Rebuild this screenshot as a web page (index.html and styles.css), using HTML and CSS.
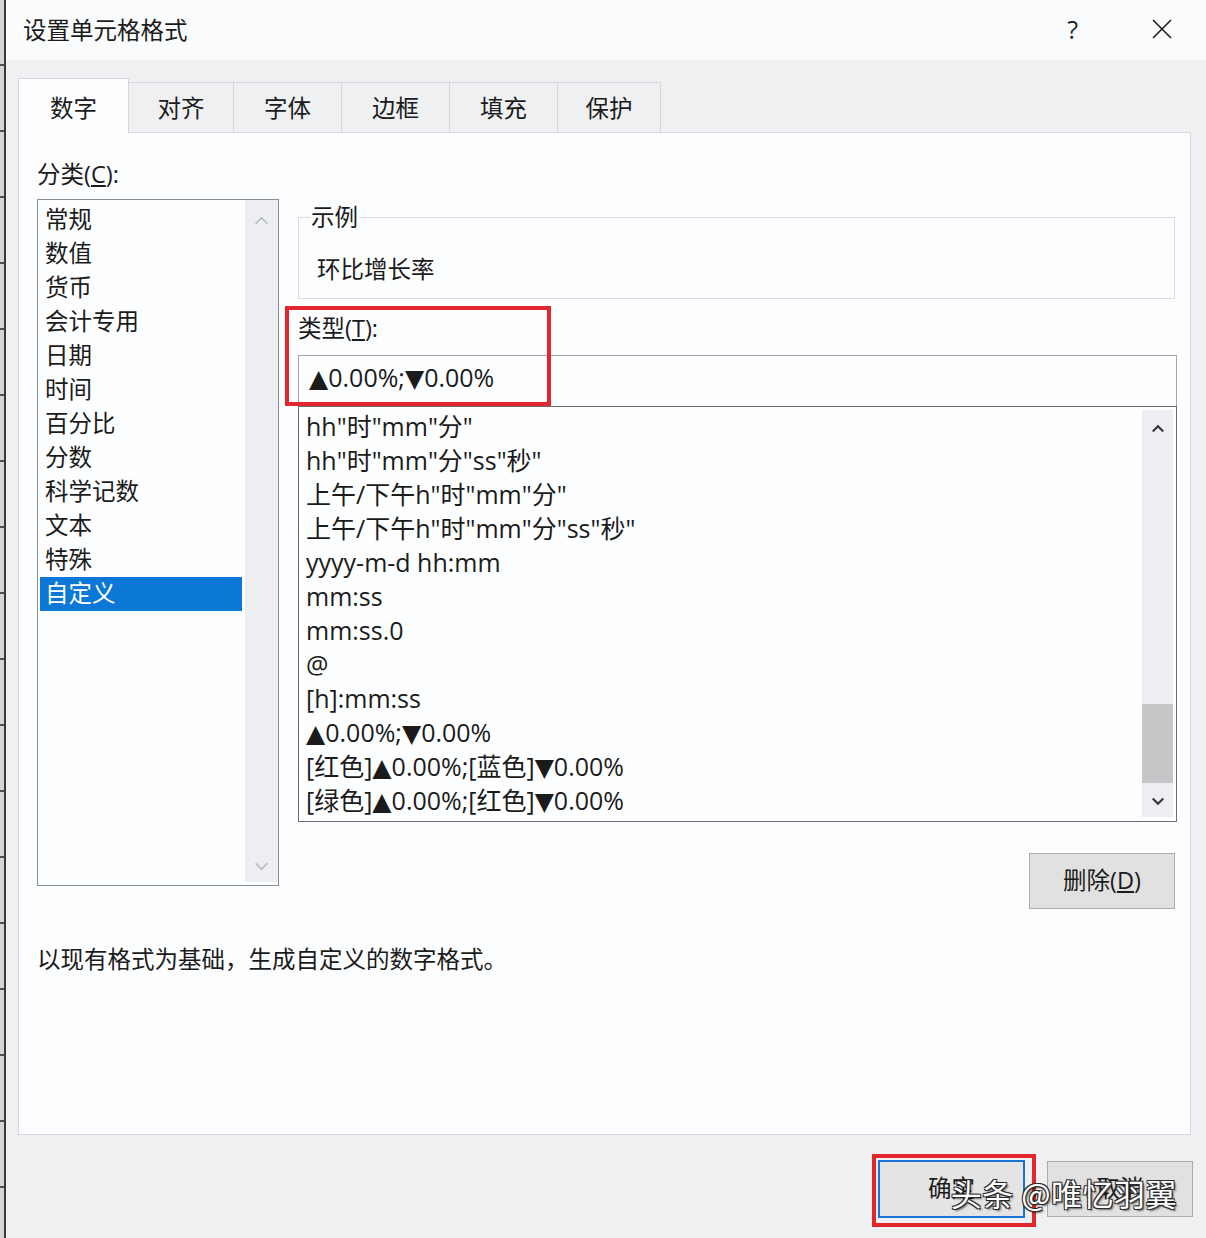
FILE: index.html
```html
<!DOCTYPE html>
<html lang="zh-CN">
<head>
<meta charset="utf-8">
<title>设置单元格格式</title>
<link rel="stylesheet" href="styles.css">
</head>
<body>
<div class="screen">
  <div class="sheet-strip"></div>
  <div class="dialog">
    <header class="titlebar">
      <span class="title">设置单元格格式</span>
      <div class="title-actions">
        <span class="help">?</span>
        <svg class="close" viewBox="0 0 20 20" width="20" height="20"><path d="M1 1 L19 19 M19 1 L1 19" stroke="#1e1e1e" stroke-width="1.6" fill="none"/></svg>
      </div>
    </header>
    <div class="body">
      <nav class="tabs">
        <div class="tab active w-num">数字</div>
        <div class="tab w-align">对齐</div>
        <div class="tab w-std">字体</div>
        <div class="tab w-std">边框</div>
        <div class="tab w-std">填充</div>
        <div class="tab w-prot">保护</div>
      </nav>
      <section class="panel">
        <div class="panel-top">
          <div class="col-left">
            <div class="label">分类(<u>C</u>):</div>
            <div class="listbox cat-list">
              <ul class="cat-items">
                <li>常规</li>
                <li>数值</li>
                <li>货币</li>
                <li>会计专用</li>
                <li>日期</li>
                <li>时间</li>
                <li>百分比</li>
                <li>分数</li>
                <li>科学记数</li>
                <li>文本</li>
                <li>特殊</li>
                <li class="selected">自定义</li>
              </ul>
              <div class="vscroll cat-scroll">
                <div class="sb-btn sb-up"><svg viewBox="0 0 16 10" width="15" height="9"><path d="M1.5 8.5 L8 2 L14.5 8.5" fill="none" stroke="#b3b6bb" stroke-width="1.6"/></svg></div>
                <div class="sb-track"></div>
                <div class="sb-btn sb-down"><svg viewBox="0 0 16 10" width="15" height="9"><path d="M1.5 1.5 L8 8 L14.5 1.5" fill="none" stroke="#b3b6bb" stroke-width="1.6"/></svg></div>
              </div>
            </div>
          </div>
          <div class="col-right">
            <fieldset class="sample">
              <legend>示例</legend>
              <div class="sample-value">环比增长率</div>
            </fieldset>
            <div class="label type-label">类型(<u>T</u>):</div>
            <div class="type-input">▲0.00%;▼0.00%</div>
            <div class="listbox fmt-list">
              <ul class="fmt-items">
                <li>hh"时"mm"分"</li>
                <li>hh"时"mm"分"ss"秒"</li>
                <li>上午/下午h"时"mm"分"</li>
                <li>上午/下午h"时"mm"分"ss"秒"</li>
                <li>yyyy-m-d hh:mm</li>
                <li>mm:ss</li>
                <li>mm:ss.0</li>
                <li>@</li>
                <li>[h]:mm:ss</li>
                <li>▲0.00%;▼0.00%</li>
                <li>[红色]▲0.00%;[蓝色]▼0.00%</li>
                <li>[绿色]▲0.00%;[红色]▼0.00%</li>
              </ul>
              <div class="vscroll fmt-scroll">
                <div class="sb-btn sb-up"><svg viewBox="0 0 16 10" width="14" height="9"><path d="M2 8.5 L8 2.5 L14 8.5" fill="none" stroke="#333" stroke-width="2.4"/></svg></div>
                <div class="sb-track"><div class="sb-thumb"></div></div>
                <div class="sb-btn sb-down"><svg viewBox="0 0 16 10" width="14" height="9"><path d="M2 1.5 L8 7.5 L14 1.5" fill="none" stroke="#333" stroke-width="2.4"/></svg></div>
              </div>
            </div>
            <div class="btn-row">
              <button class="btn">删除(<u>D</u>)</button>
            </div>
            <div class="mark type-mark"></div>
          </div>
        </div>
        <p class="desc">以现有格式为基础，生成自定义的数字格式。</p>
      </section>
      <footer class="actions">
        <div class="ok-wrap">
          <button class="btn ok">确定</button>
        </div>
        <button class="btn cancel">取消</button>
        <div class="watermark">头条 @唯忆羽翼</div>
      </footer>
    </div>
  </div>
</div>
</body>
</html>
```

FILE: styles.css
```css
* { box-sizing: border-box; }

html, body {
  margin: 0;
  padding: 0;
}

body {
  width: 1206px;
  height: 1238px;
  overflow: hidden;
  font-family: "Open Sans", "Noto Sans CJK SC", sans-serif;
  color: #1b1b1b;
  background: #eff0f2;
}

.screen {
  display: flex;
  width: 1206px;
  height: 1238px;
}

.sheet-strip {
  width: 6px;
  flex: none;
  border-right: 2px solid #3a3a3a;
  background: repeating-linear-gradient(to bottom, #d4d5d6 0 64px, #505050 64px 66px);
}

.dialog {
  flex: 1;
  display: flex;
  flex-direction: column;
  background: #eff0f2;
}

.titlebar {
  height: 60px;
  flex: none;
  background: #fafbfc;
  display: flex;
  align-items: center;
  justify-content: space-between;
  padding: 0 34px 3px 17px;
}

.title {
  font-family: "Noto Sans CJK SC", sans-serif;
  font-size: 23.5px;
  line-height: 30px;
}

.title-actions {
  display: flex;
  align-items: center;
  gap: 74px;
}

.help {
  font-family: "Open Sans", sans-serif;
  font-size: 25px;
  line-height: 30px;
  color: #1e1e1e;
}

.close {
  display: block;
}

.body {
  flex: 1;
  display: flex;
  flex-direction: column;
  padding: 18px 15px 0 12px;
}

/* tabs */
.tabs {
  display: flex;
  align-items: flex-end;
  height: 55px;
  margin-bottom: -1px;
  position: relative;
  z-index: 1;
  flex: none;
}

.tab {
  height: 50px;
  margin-bottom: 1px;
  margin-left: -1px;
  padding-bottom: 2px;
  display: flex;
  align-items: center;
  justify-content: center;
  border: 1px solid #d5d7da;
  border-bottom: 0;
  background: #eff0f2;
  font-family: "Noto Sans CJK SC", sans-serif;
  font-size: 23.5px;
  color: #1b1b1b;
}

.tab.active {
  height: 55px;
  margin-bottom: 0;
  margin-left: 0;
  padding-top: 3px;
  background: #fcfdfe;
}

.w-num { width: 111px; }
.w-align { width: 106px; }
.w-std { width: 109px; }
.w-prot { width: 104px; }

/* panel */
.panel {
  height: 1003px;
  flex: none;
  background: #fcfdfe;
  border: 1px solid #d5d7da;
  padding: 0 0 0 18px;
  display: flex;
  flex-direction: column;
}

.panel-top {
  display: flex;
  align-items: flex-start;
}

.label {
  font-size: 23.5px;
  line-height: 30px;
}

.col-left {
  width: 242px;
  flex: none;
  padding-top: 26px;
}

.col-left .label {
  margin-bottom: 2px;
}

.listbox {
  display: flex;
  background: #fdfeff;
}

.cat-list {
  margin-top: 10px;
  height: 687px;
  border: 1px solid #8a8d93;
}

.cat-items {
  flex: 1;
  list-style: none;
  margin: 0;
  padding: 3px 0 0 2px;
}

.cat-items li {
  width: 202px;
  padding-left: 5px;
  padding-bottom: 4px;
  font-family: "Noto Sans CJK SC", sans-serif;
  font-size: 23.5px;
  line-height: 30px;
}

.cat-items li.selected {
  background: #0b78d7;
  color: #ffffff;
}

.vscroll {
  flex: none;
  display: flex;
  flex-direction: column;
  background: #eceef1;
}

.cat-scroll {
  width: 33px;
  margin: 0 0 3px 0;
}

.fmt-scroll {
  width: 31px;
  margin: 3px 3px 4px 0;
}

.sb-btn {
  flex: none;
  display: flex;
  align-items: center;
  justify-content: center;
}

.sb-up { height: 38px; }
.cat-scroll .sb-up { height: 40px; }
.fmt-scroll .sb-up { height: 36px; }
.sb-down { height: 32px; }

.sb-btn svg { display: block; }

.sb-track {
  flex: 1;
  display: flex;
  flex-direction: column;
}

.sb-thumb {
  margin-top: 258px;
  height: 79px;
  background: #c5c6c8;
}

/* right column */
.col-right {
  width: 879px;
  flex: none;
  margin-left: 19px;
  display: flex;
  flex-direction: column;
  position: relative;
}

.sample {
  margin: 69px 2px 0 0;
  padding: 0;
  border: 1px solid #d9dbde;
  min-width: 0;
}

.sample legend {
  margin-left: 11px;
  padding: 0 1px 2px;
  font-family: "Noto Sans CJK SC", sans-serif;
  font-size: 23.5px;
  line-height: 28px;
}

.sample-value {
  padding: 21px 0 15px 18px;
  font-family: "Noto Sans CJK SC", sans-serif;
  font-size: 23.5px;
  line-height: 30px;
}

.type-label {
  margin-top: 14px;
  margin-bottom: 2px;
}

.type-input {
  margin-top: 10px;
  height: 51px;
  border: 1px solid #a3a5a9;
  border-bottom: 0;
  padding-left: 10px;
  font-family: "Open Sans", "DejaVu Sans", "Noto Sans CJK SC", sans-serif;
  font-size: 25px;
  line-height: 43px;
  background: #fdfeff;
  white-space: nowrap;
}

.fmt-list {
  height: 416px;
  border: 1px solid #6c6e73;
}

.fmt-items {
  flex: 1;
  list-style: none;
  margin: 0;
  padding: 3px 0 0 7px;
}

.fmt-items li {
  font-family: "Open Sans", "DejaVu Sans", "Noto Sans CJK SC", sans-serif;
  font-size: 25px;
  line-height: 33px;
  padding-bottom: 1px;
  white-space: nowrap;
}

.btn-row {
  display: flex;
  justify-content: flex-end;
  margin-top: 31px;
  padding-right: 2px;
}

.btn {
  width: 146px;
  height: 56px;
  margin: 0;
  padding: 0 0 2px;
  background: #e1e1e1;
  border: 1px solid #acacac;
  font-family: "Open Sans", "Noto Sans CJK SC", sans-serif;
  font-size: 23.5px;
  line-height: 30px;
  color: #1b1b1b;
}

.mark {
  position: absolute;
  border: 4px solid #e3262c;
}

.type-mark {
  left: -13px;
  top: 173px;
  width: 266px;
  height: 100px;
}

.desc {
  margin: 34px 0 0 0;
  font-family: "Noto Sans CJK SC", sans-serif;
  font-size: 23.5px;
  line-height: 30px;
}

/* footer */
.actions {
  position: relative;
  display: flex;
  justify-content: flex-end;
  align-items: flex-start;
  padding-top: 19px;
  margin-right: -2px;
  flex: 1;
}

.ok-wrap {
  display: flex;
  border: 4px solid #e3262c;
  padding: 2px 7px 5px 2px;
}

.btn.ok {
  width: 147px;
  height: 58px;
  border: 2px solid #1a74d6;
  background: #e4e4e4;
}

.btn.cancel {
  margin-left: 11px;
  margin-top: 7px;
}

.watermark {
  position: absolute;
  right: 16px;
  top: 40px;
  font-family: "Noto Sans CJK SC", sans-serif;
  font-size: 31px;
  line-height: 36px;
  letter-spacing: 0.5px;
  color: #ffffff;
  white-space: nowrap;
  text-shadow:
    1px 1px 0 #2a2a2a,
    -1px -1px 0 #2a2a2a,
    1px -1px 0 #2a2a2a,
    -1px 1px 0 #2a2a2a,
    2px 2px 2px rgba(0, 0, 0, 0.55);
}
```
